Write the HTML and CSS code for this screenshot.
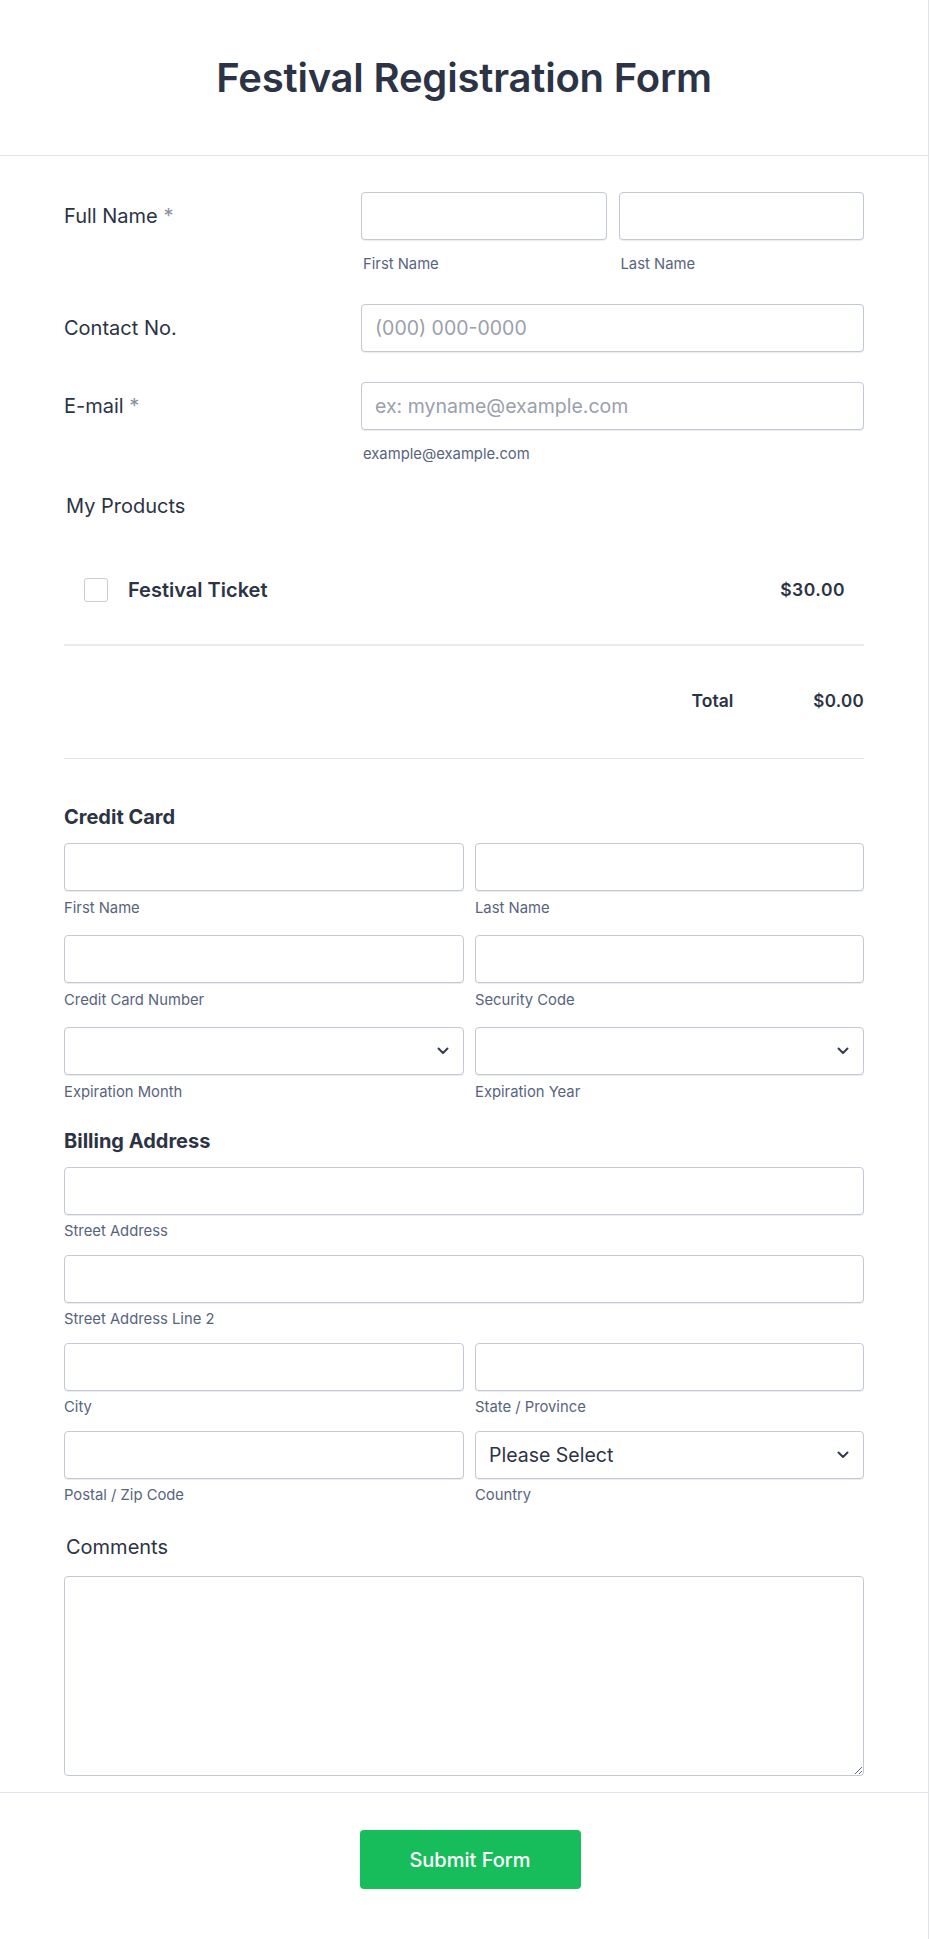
FILE: index.html
```html
<!DOCTYPE html>
<html lang="en">
<head>
<meta charset="utf-8">
<title>Festival Registration Form</title>
<link rel="stylesheet" href="styles.css">
</head>
<body>
<div class="form">
  <header class="form-header">
    <h1 class="form-title">Festival Registration Form</h1>
  </header>

  <div class="form-body">
    <div class="line line-first">
      <label class="line-label">Full Name <span class="req">*</span></label>
      <div class="line-field pair">
        <div class="sub">
          <input class="input" type="text">
          <span class="sublabel">First Name</span>
        </div>
        <div class="sub">
          <input class="input" type="text">
          <span class="sublabel">Last Name</span>
        </div>
      </div>
    </div>

    <div class="line">
      <label class="line-label">Contact No.</label>
      <div class="line-field">
        <input class="input" type="text" placeholder="(000) 000-0000">
      </div>
    </div>

    <div class="line">
      <label class="line-label">E-mail <span class="req">*</span></label>
      <div class="line-field sub">
        <input class="input" type="text" placeholder="ex: myname@example.com">
        <span class="sublabel">example@example.com</span>
      </div>
    </div>

    <div class="block-label products-label">My Products</div>
    <div class="product">
      <div class="product-left">
        <span class="checkbox"></span>
        <span class="product-name">Festival Ticket</span>
      </div>
      <span class="product-price">$30.00</span>
    </div>
    <div class="total">
      <span class="total-label">Total</span>
      <span class="total-value">$0.00</span>
    </div>

    <h2 class="section-title cc-title">Credit Card</h2>
    <div class="grid cc-grid">
      <div class="sub"><input class="input" type="text"><span class="sublabel">First Name</span></div>
      <div class="sub"><input class="input" type="text"><span class="sublabel">Last Name</span></div>
      <div class="sub"><input class="input" type="text"><span class="sublabel">Credit Card Number</span></div>
      <div class="sub"><input class="input" type="text"><span class="sublabel">Security Code</span></div>
      <div class="sub">
        <div class="select"><span class="select-value"></span><svg class="chev" viewBox="0 0 12 8" width="12" height="8"><path d="M1.5 1.5 L6 6 L10.5 1.5" fill="none" stroke="#343c4f" stroke-width="2" stroke-linecap="round" stroke-linejoin="round"/></svg></div>
        <span class="sublabel">Expiration Month</span>
      </div>
      <div class="sub">
        <div class="select"><span class="select-value"></span><svg class="chev" viewBox="0 0 12 8" width="12" height="8"><path d="M1.5 1.5 L6 6 L10.5 1.5" fill="none" stroke="#343c4f" stroke-width="2" stroke-linecap="round" stroke-linejoin="round"/></svg></div>
        <span class="sublabel">Expiration Year</span>
      </div>
    </div>

    <h2 class="section-title billing-title">Billing Address</h2>
    <div class="grid addr-grid">
      <div class="sub span2"><input class="input" type="text"><span class="sublabel">Street Address</span></div>
      <div class="sub span2"><input class="input" type="text"><span class="sublabel">Street Address Line 2</span></div>
      <div class="sub"><input class="input" type="text"><span class="sublabel">City</span></div>
      <div class="sub"><input class="input" type="text"><span class="sublabel">State / Province</span></div>
      <div class="sub"><input class="input" type="text"><span class="sublabel">Postal / Zip Code</span></div>
      <div class="sub">
        <div class="select"><span class="select-value">Please Select</span><svg class="chev" viewBox="0 0 12 8" width="12" height="8"><path d="M1.5 1.5 L6 6 L10.5 1.5" fill="none" stroke="#343c4f" stroke-width="2" stroke-linecap="round" stroke-linejoin="round"/></svg></div>
        <span class="sublabel">Country</span>
      </div>
    </div>

    <div class="block-label comments-label">Comments</div>
    <textarea class="textarea"></textarea>
  </div>

  <footer class="form-footer">
    <button class="submit" type="button">Submit Form</button>
  </footer>
</div>
</body>
</html>
```

FILE: styles.css
```css
* { box-sizing: border-box; }

html, body {
  margin: 0;
  padding: 0;
  background: #ffffff;
}

body {
  font-family: Inter, "Noto Sans", "Liberation Sans", sans-serif;
  color: #2c3345;
}

.form {
  width: 929px;
  min-height: 1939px;
  border-right: 1px solid #e2e4ec;
  background: #ffffff;
}

.form-header {
  height: 156px;
  border-bottom: 1px solid #e1e3ee;
  display: flex;
  align-items: center;
  justify-content: center;
}

.form-title {
  margin: 0;
  font-size: 40px;
  font-weight: 600;
  line-height: 48px;
  color: #2c3345;
  letter-spacing: -0.2px;
}

.form-body {
  padding: 0 64px;
}

/* left-label lines */
.line {
  display: grid;
  grid-template-columns: 297px 1fr;
  margin-top: 30px;
}
.line-first { margin-top: 36px; }

.line-label {
  font-size: 20px;
  font-weight: 400;
  line-height: 48px;
  color: #2c3345;
}
.req { color: #8a91a0; }

.pair {
  display: grid;
  grid-template-columns: 1fr 1fr;
  column-gap: 12px;
}

.sub {
  display: flex;
  flex-direction: column;
}

.input {
  display: block;
  width: 100%;
  height: 48px;
  border: 1px solid #c3c8d5;
  border-radius: 4px;
  padding: 0 13px;
  font-family: inherit;
  font-size: 19.5px;
  color: #2c3345;
  background: #fff;
  outline: none;
  box-shadow: 0 1px 0 rgba(200, 204, 216, 0.35);
}
.input::placeholder { color: #9aa0ac; }

.sublabel {
  font-size: 14.8px;
  line-height: 20px;
  color: #57647e;
}
.line .sublabel {
  margin-top: 14px;
  padding-left: 2px;
}

.block-label {
  font-size: 20px;
  font-weight: 400;
  line-height: 24px;
  padding-left: 2px;
  color: #2c3345;
}
.products-label { margin-top: 30px; }

.product {
  display: flex;
  align-items: center;
  justify-content: space-between;
  padding: 60px 19px 42px 20px;
  border-bottom: 2px solid #eaebf0;
}
.product-left {
  display: flex;
  align-items: center;
  gap: 20px;
}
.checkbox {
  width: 24px;
  height: 24px;
  border: 1px solid #c8ccd8;
  border-radius: 3px;
  background: #fff;
}
.product-name {
  font-size: 20px;
  font-weight: 600;
  line-height: 24px;
}
.product-price {
  font-size: 17.5px;
  font-weight: 600;
  letter-spacing: 0.5px;
  line-height: 24px;
}

.total {
  display: flex;
  justify-content: flex-end;
  align-items: center;
  gap: 80px;
  padding: 43px 0 45px;
  border-bottom: 1px solid #e3e5ee;
  font-size: 17.5px;
  font-weight: 600;
  line-height: 24px;
}
.total-value { font-size: 17px; letter-spacing: 0.3px; }

.section-title {
  margin: 0;
  font-size: 20px;
  font-weight: 700;
  line-height: 24px;
  color: #2c3345;
}
.cc-title { margin-top: 46px; }
.billing-title { margin-top: 27px; }

.grid {
  display: grid;
  grid-template-columns: 400px 1fr;
  column-gap: 11px;
  margin-top: 14px;
}
.cc-grid { row-gap: 17px; }
.addr-grid { row-gap: 14px; }
.span2 { grid-column: 1 / span 2; }

.grid .sublabel { margin-top: 7px; }
.addr-grid .sublabel { margin-top: 6px; }

.select {
  height: 48px;
  border: 1px solid #c3c8d5;
  border-radius: 4px;
  padding: 0 14px 0 13px;
  display: flex;
  align-items: center;
  justify-content: space-between;
  background: #fff;
  box-shadow: 0 1px 0 rgba(200, 204, 216, 0.35);
}
.select-value {
  font-size: 19.5px;
  color: #2c3345;
}
.chev { display: block; }

.comments-label { margin-top: 30px; }

.textarea {
  display: block;
  width: 100%;
  height: 200px;
  margin-top: 17px;
  border: 1px solid #c3c8d5;
  border-radius: 4px;
  font-family: inherit;
  font-size: 16px;
  padding: 10px 13px;
  resize: vertical;
  outline: none;
}

.form-footer {
  margin-top: 16px;
  border-top: 1px solid #e1e3ee;
  padding: 37px 0 50px 12px;
  display: flex;
  justify-content: center;
}

.submit {
  width: 221px;
  height: 59px;
  border: none;
  border-radius: 4px;
  background: #18bd5b;
  color: #ffffff;
  font-family: inherit;
  font-size: 20px;
  font-weight: 500;
  cursor: pointer;
}
```
